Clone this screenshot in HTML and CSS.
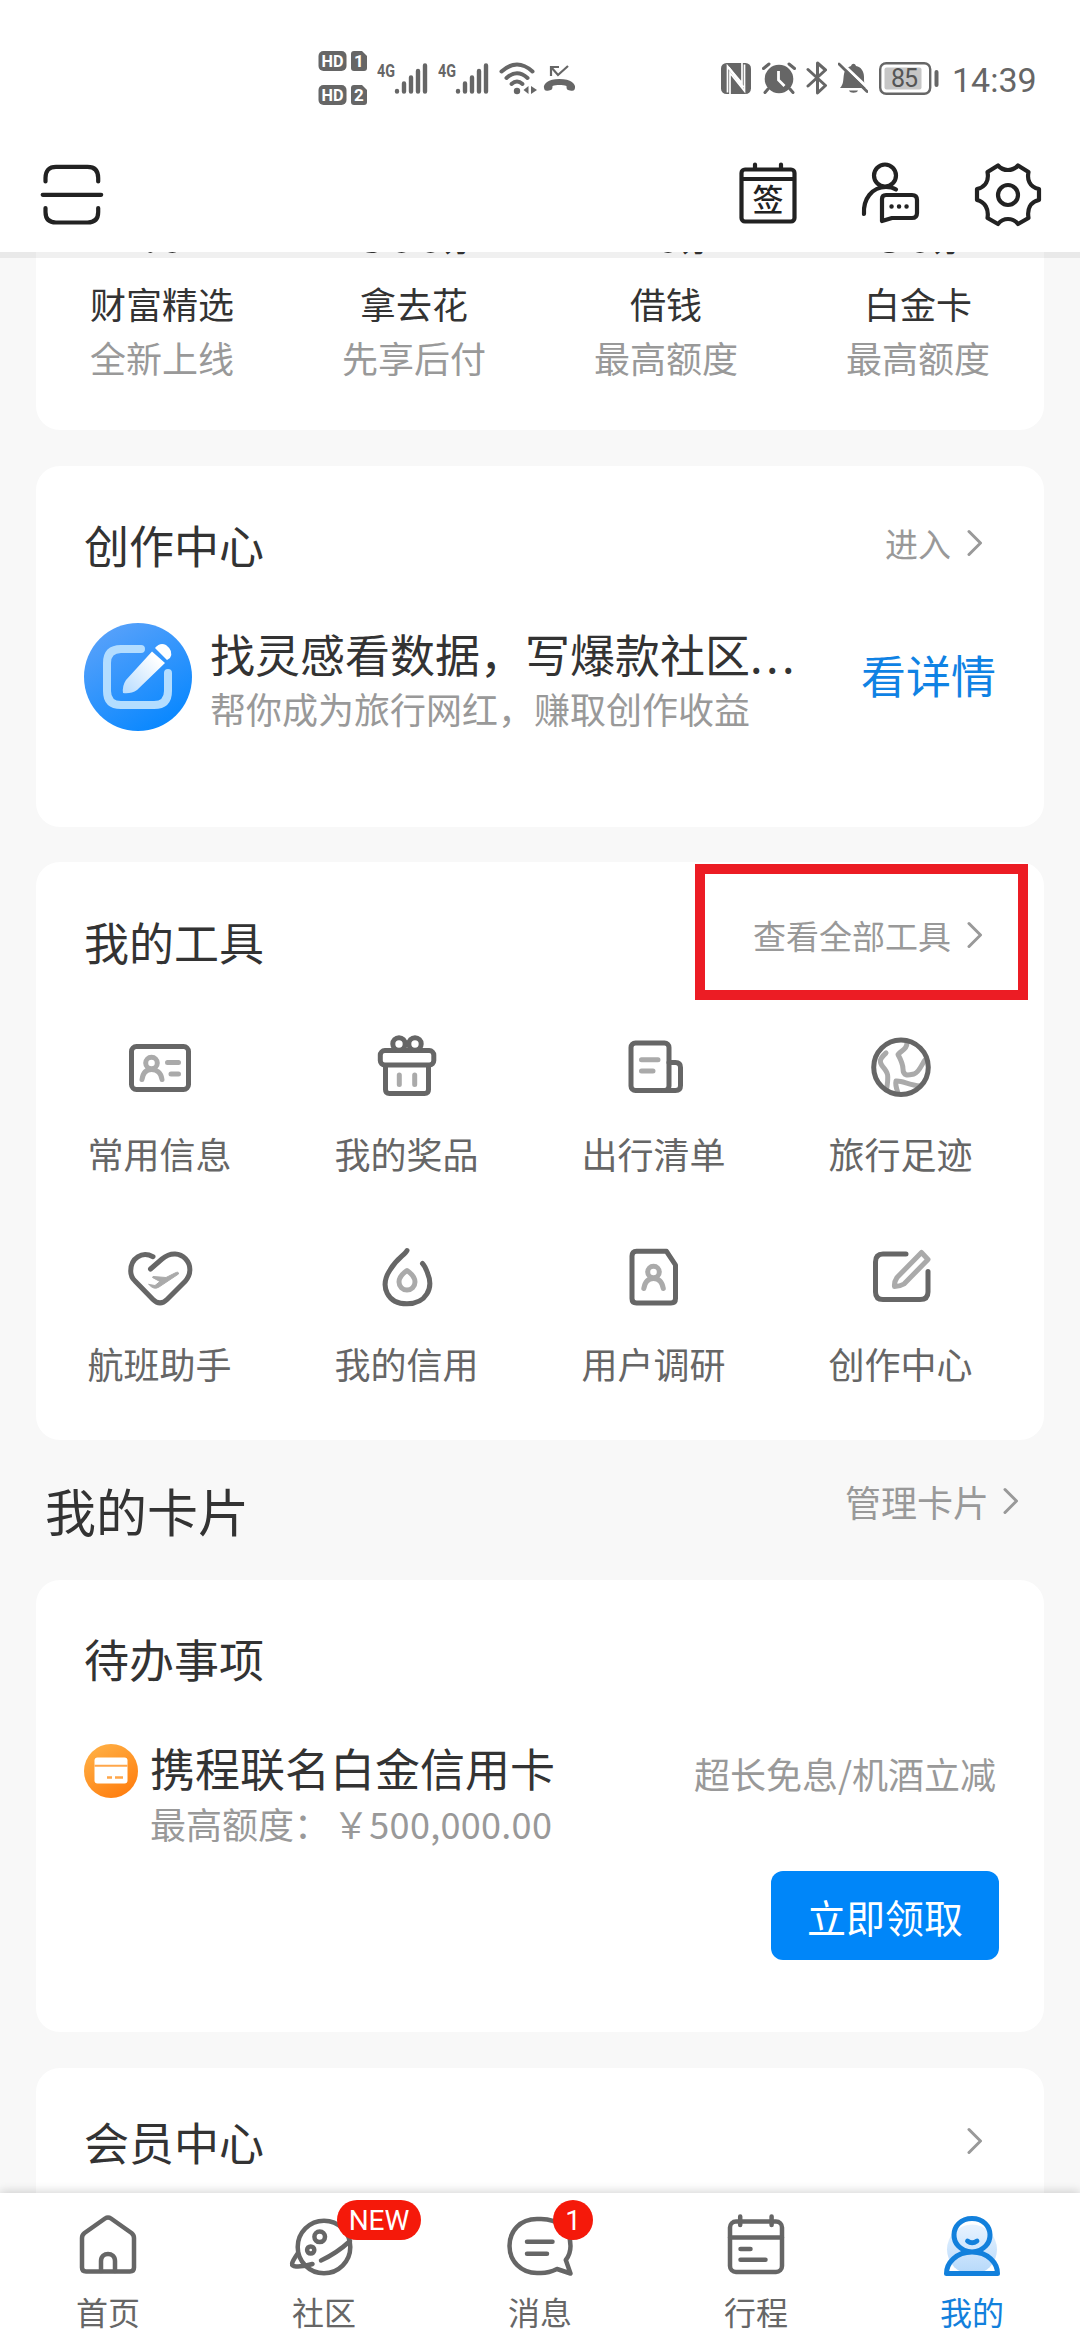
FILE: index.html
```html
<!DOCTYPE html>
<html lang="zh-CN">
<head>
<meta charset="utf-8">
<title>我的</title>
<link rel="stylesheet" href="styles.css">
</head>
<body>
<div class="screen">
  <header class="header">
    <div class="status">
      <div class="status-left">
        <svg class="st-sims" width="50" height="58" viewBox="0 0 50 58">
          <rect x="0.5" y="2" width="28" height="20" rx="5" fill="#666"/>
          <path d="M36 2h8l5 5v12a3 3 0 0 1-3 3H36a3 3 0 0 1-3-3V5a3 3 0 0 1 3-3z" fill="#666"/>
          <text x="14.5" y="18" class="st-hd" textLength="22" lengthAdjust="spacingAndGlyphs">HD</text><text x="41" y="18" class="st-hd">1</text>
          <rect x="0.5" y="36" width="28" height="20" rx="5" fill="#666"/>
          <path d="M36 36h8l5 5v12a3 3 0 0 1-3 3H36a3 3 0 0 1-3-3V39a3 3 0 0 1 3-3z" fill="#666"/>
          <text x="14.5" y="52" class="st-hd" textLength="22" lengthAdjust="spacingAndGlyphs">HD</text><text x="41" y="52" class="st-hd">2</text>
        </svg>
        <svg class="st-signal" width="52" height="34" viewBox="0 0 52 34">
          <text x="0" y="16" class="st-4g" textLength="18" lengthAdjust="spacingAndGlyphs">4G</text>
          <path d="M20 30.5v-.5M27 30.5v-8M34 30.5v-14M41 30.5v-20.500M48 30.500v-26" stroke="#666" stroke-width="4.400" stroke-linecap="round"/>
        </svg>
        <svg class="st-signal" width="52" height="34" viewBox="0 0 52 34">
          <text x="0" y="16" class="st-4g" textLength="18" lengthAdjust="spacingAndGlyphs">4G</text>
          <path d="M20 30.5v-.5M27 30.5v-8M34 30.5v-14M41 30.5v-20.500M48 30.500v-26" stroke="#666" stroke-width="4.400" stroke-linecap="round"/>
        </svg>
        <svg class="st-wifi" width="38" height="34" viewBox="0 0 38 34">
          <g fill="none" stroke="#666" stroke-width="4" stroke-linecap="round"><path d="M2.500 10.500Q18 -3.500 33.500 10.500"/><path d="M7.500 17Q18 7.500 28.500 17"/><path d="M12.500 23Q18 18 23.500 23"/></g>
          <circle cx="18" cy="30" r="3.200" fill="#666"/>
          <path d="M29.500 25v8l-5-4zM32 25v8l6-4z" fill="#666"/>
        </svg>
        <svg width="33" height="28" viewBox="0 0 33 28">
          <path d="M8 12V3h8M8 3l7 8L25 2" fill="none" stroke="#666" stroke-width="2.200"/>
          <path d="M1 24c-1-4 4-9 15.500-9S33 20 32 24c-.5 3-2 3-5 2.500-3-.4-3.500-1.500-3.500-4.500-4-1.300-10-1.300-14 0 0 3-.5 4.100-3.500 4.500-3 .5-4.500.5-5-2.500z" fill="#666"/>
        </svg>
      </div>
      <div class="status-right">
        <svg width="30" height="31" viewBox="0 0 30 31">
          <rect width="30" height="31" rx="5.500" fill="#666"/>
          <path d="M6.500 29.500V3L21 20V0M23.500 1.500V28L9 10V31" fill="none" stroke="#fff" stroke-width="1.700"/>
          <path d="M7.500 4.500 22.500 24.500" stroke="#fff" stroke-width="2.400"/>
        </svg>
        <svg class="st-alarm" width="34" height="32" viewBox="0 0 34 32">
          <circle cx="17" cy="17" r="14.300" fill="#666"/>
          <path d="M1.500 6.500 7 2M32.500 6.500 27 2M6 27l-3 3.500M28 27l3 3.500" stroke="#666" stroke-width="3" stroke-linecap="round"/>
          <path d="M16.500 9v9l6 6" fill="none" stroke="#fff" stroke-width="2.800"/>
        </svg>
        <svg class="st-bt" width="22" height="34" viewBox="0 0 22 34">
          <path d="M2 8.500 19.500 24.500 11.500 32V2l8 7L2 25" fill="none" stroke="#666" stroke-width="3" stroke-linejoin="round" stroke-linecap="round"/>
        </svg>
        <svg class="st-bell" width="30" height="34" viewBox="0 0 30 34">
          <path d="M2 27c4-4 3-9 4-14 1-5 4-7 7-8 1-3 4-3 5 0 5 1 8 5 8 11 0 5 0 8 3 11zM11 29.500h9c-1 3-8 3-9 0z" fill="#666"/>
          <path d="M3 1.500 32 29" stroke="#fff" stroke-width="3"/><path d="M1 3 29 30.500" stroke="#666" stroke-width="2.800" stroke-linecap="round"/>
        </svg>
        <svg class="st-battery" width="60" height="33" viewBox="0 0 60 33">
          <rect x="1.200" y="1.200" width="50" height="30.600" rx="6" fill="none" stroke="#666" stroke-width="2.400"/>
          <rect x="5.500" y="5.500" width="37" height="22" rx="2" fill="#c6c6c6"/>
          <rect x="55.500" y="8" width="4" height="17" rx="2" fill="#666"/>
          <text x="25.500" y="25" class="st-pct" textLength="27">85</text>
        </svg>
        <span class="time">14:39</span>
      </div>
    </div>
    <div class="toolbar">
      <svg class="bar-icon" viewBox="0 0 72 72">
        <path d="M9.500 22.500V19Q9.500 7.800 20 7.800H51.500Q62.200 7.800 62.200 19V22.500M9.500 49V53Q9.500 63.500 20 63.500H51.500Q62.200 63.500 62.200 53V49M6.700 35.800H65.200"/>
      </svg>
      <div class="bar-actions">
        <svg class="bar-icon" viewBox="0 0 72 72">
          <rect x="9.500" y="10.500" width="53" height="52" rx="3.500"/><path d="M10 20H62M23 5.500v4M49 5.500v4"/>
          <text x="36" y="52" class="sign">签</text>
        </svg>
        <svg class="bar-icon" viewBox="0 0 72 72">
          <circle cx="33" cy="16.500" r="11"/><path d="M12 55C11 40 20 28 34 28Q40 28 44 30.500"/>
          <path d="M30 62V40Q30 36 34 36H60Q65 36 65 41V54Q65 59 60 59H40Z"/><path d="M39.500 47.500h.1M47 47.500h.1M54.500 47.500h.1" stroke-width="4.400"/>
        </svg>
        <svg class="bar-icon" viewBox="0 0 72 72">
          <path d="M26 6.500Q30 11 36 11T46 6.500L56.500 13C55 20 57 28 67 30V41C58 43 55 50 56.500 59L46 65Q42 60 36 60T26 65L15.500 59C17 50 13 43 5 41V30C14 28 17 21 15.500 13Z"/>
          <circle cx="36" cy="36" r="10"/>
        </svg>
      </div>
    </div>
  </header>

  <main class="content">
    <section class="card finance">
      <div class="fin"><p class="fin-num">7.0<small>%</small></p><p class="fin-name">财富精选</p><p class="fin-desc">全新上线</p></div>
      <div class="fin"><p class="fin-num">300<small>万</small></p><p class="fin-name">拿去花</p><p class="fin-desc">先享后付</p></div>
      <div class="fin"><p class="fin-num">20<small>万</small></p><p class="fin-name">借钱</p><p class="fin-desc">最高额度</p></div>
      <div class="fin"><p class="fin-num">50<small>万</small></p><p class="fin-name">白金卡</p><p class="fin-desc">最高额度</p></div>
    </section>

    <section class="card creator">
      <div class="head"><h2>创作中心</h2><a class="more">进入<svg class="chev" viewBox="0 0 16 28"><path d="M2 2.500 13.500 14 2 25.500"/></svg></a></div>
      <div class="creator-row">
        <svg class="creator-icon" viewBox="0 0 108 108">
          <defs>
            <linearGradient id="blue" x1="0.2" y1="0" x2="0.8" y2="1"><stop offset="0" stop-color="#5aa2fa"/><stop offset="1" stop-color="#0486ff"/></linearGradient>
            <linearGradient id="pen" x1="1" y1="0" x2="0" y2="1"><stop offset="0.300" stop-color="#fff"/><stop offset="1" stop-color="#b6dcff"/></linearGradient>
          </defs>
          <circle cx="54" cy="54" r="54" fill="url(#blue)"/>
          <path d="M57 26H37Q23 26 23 40V68Q23 82 37 82H70Q84 82 84 68V50" fill="none" stroke="#b3ddff" stroke-width="8" stroke-linecap="round"/>
          <path d="M68 28.500 81 40 53 67Q47 71 39 70Q38 63 42 57ZM71 25Q76 19 82 22Q90 28 86 35L83 37Z" fill="url(#pen)"/>
        </svg>
        <div class="creator-text"><p class="t45">找灵感看数据，写爆款社区<span class="dots">...</span></p><p class="t36">帮你成为旅行网红，赚取创作收益</p></div>
        <a class="detail">看详情</a>
      </div>
    </section>

    <section class="card tools">
      <div class="head"><h2>我的工具</h2><a class="more more-up">查看全部工具<svg class="chev" viewBox="0 0 16 28"><path d="M2 2.500 13.500 14 2 25.500"/></svg></a></div>
      <div class="highlight"></div>
      <div class="grid">
        <div class="tool"><svg viewBox="0 0 72 72"><rect x="7.500" y="14.500" width="57" height="43" rx="5"/><g class="soft"><circle cx="27.500" cy="31" r="5.800"/><path d="M18 47.500C19 40 23 37.500 27.500 37.500S37 40 38 47.500M43.500 30.500H54.500M47 42H54.500"/></g></svg><span>常用信息</span></div>
        <div class="tool"><svg viewBox="0 0 72 72"><rect x="9.300" y="18.600" width="53.500" height="14.500" rx="4.500"/><path d="M14.500 33.500V57.500Q14.500 61.500 18.500 61.500H53.500Q57.500 61.500 57.500 57.500V33.500"/><circle cx="28" cy="12" r="6.200"/><circle cx="44" cy="12" r="6.200"/><path class="soft" d="M28.300 43V52.500M43.700 43V52.500"/></svg><span>我的奖品</span></div>
        <div class="tool"><svg viewBox="0 0 72 72"><rect x="13" y="11" width="38" height="47.500" rx="4.500"/><path d="M51 30.500H57.500Q62.500 30.500 62.500 35.500V53.500Q62.500 58.500 57.500 58.500H46"/><path class="soft" d="M23.500 27.800H40M23.500 39H35"/></svg><span>出行清单</span></div>
        <div class="tool"><svg viewBox="0 0 72 72"><path class="soft" d="M21 21C13 28 15 31 18 35C23 41 24 42 21.500 58M42 11C42 18 35 19 33 22.500C36 28 38 33 38 37C38 45 44 43 49 42C54 41 58 30 60 28M55 54C44 53 36 48 31 49C30 53 32 58 33 61"/><circle cx="36" cy="35.300" r="27.300"/></svg><span>旅行足迹</span></div>
        <div class="tool"><svg viewBox="0 0 72 72"><path d="M29 14.700C18 9 6.700 16 6.700 29Q6.700 35 11 39L29 57.500Q36 64.500 43 57.500L61 39.500C75 24 56 2 38 17L26.500 27"/><path class="solid" d="M25 42.500 31 43.500 36 39.500 28.500 35.500 29 34.500 42 35.500 51 31Q55 29 54.500 32L35 45Q30 48.500 25 42.500Z"/></svg><span>航班助手</span></div>
        <div class="tool"><svg viewBox="0 0 72 72"><path d="M36 8.500C34 13 26 16 19 28C8 45 17 61.800 36 61.800C55 61.800 63 46 56.500 31Q54 24 51.500 21.500"/><path class="soft" d="M36 28.500C31 32 28 36.500 28 40A8 8 0 0 0 44 40C44 36.500 41 32 36 28.500Z"/></svg><span>我的信用</span></div>
        <div class="tool"><svg viewBox="0 0 72 72"><path d="M18.500 9.300H48.500L57.500 23V56.500Q57.500 61 53 61H18.500Q14 61 14 56.500V14Q14 9.300 18.500 9.300Z"/><g class="soft"><circle cx="35.500" cy="30" r="5.800"/><path d="M25.800 46.500C27 39 31 36.500 35.500 36.500S44 39 45.300 46.500"/></g></svg><span>用户调研</span></div>
        <div class="tool"><svg viewBox="0 0 72 72"><path d="M41 12H18Q10.500 12 10.500 20V50Q10.500 57.500 18 57.500H55Q63 57.500 63 50V29.500"/><path class="soft" d="M56.500 10.500 63 17.500 39 42Q35 44.500 29.500 44.500Q29 40 32 35.500Z"/></svg><span>创作中心</span></div>
      </div>
    </section>

    <div class="section-head"><h1>我的卡片</h1><a class="manage">管理卡片<svg class="chev" viewBox="0 0 16 28"><path d="M2 2.500 13.500 14 2 25.500"/></svg></a></div>

    <section class="card todo">
      <div class="head"><h2>待办事项</h2></div>
      <div class="todo-row">
        <svg class="todo-icon" viewBox="0 0 54 54">
          <defs><linearGradient id="orange" x1="0.200" y1="0" x2="0.800" y2="1"><stop offset="0" stop-color="#ffb045"/><stop offset="1" stop-color="#ff7c0d"/></linearGradient></defs>
          <circle cx="27" cy="27" r="27" fill="url(#orange)"/>
          <rect x="10.500" y="13.500" width="33" height="26" rx="3" fill="#fff"/>
          <path d="M10.500 21.800H43.500" stroke="#ffa64a" stroke-width="2"/><path d="M23 33.500h5M31 33.500h8" stroke="#ffa64a" stroke-width="2.500"/>
        </svg>
        <div class="todo-text"><p class="t45">携程联名白金信用卡</p><p class="t36">最高额度：<span class="amount">￥500,000.00</span></p></div>
        <p class="t36 promo">超长免息/机酒立减</p>
      </div>
      <button class="claim">立即领取</button>
    </section>

    <section class="card member">
      <div class="head"><h2>会员中心</h2><svg class="chev" viewBox="0 0 16 28"><path d="M2 2.500 13.500 14 2 25.500"/></svg></div>
    </section>
  </main>

  <nav class="tabs">
    <a class="tab"><svg viewBox="0 0 72 72"><path d="M33 9.500Q36 7.500 39 9.500L59.500 24Q62 26 62 29V58.500Q62 62.500 58 62.500H14Q10 62.500 10 58.500V29Q10 26 12.500 24Z"/><path d="M29 62V52C29 42.500 43 42.500 43 52V62"/></svg><span>首页</span></a>
    <a class="tab"><svg viewBox="0 0 72 72"><circle cx="36" cy="38" r="26.300"/><circle cx="31.700" cy="27.800" r="5.300"/><circle cx="22.700" cy="41" r="3.600"/><path d="M33 51.500Q49 44 62 32M10 44C3 54 2 57 8 57.500Q15 58 24.500 55"/></svg><span>社区</span><b class="badge badge-new">NEW</b></a>
    <a class="tab"><svg viewBox="0 0 72 72"><path d="M61.800 51Q66.500 45 66.500 37C66.500 20 54 10 37 10H33C16 10 5.500 22 5.500 37S17 64 33 64H37Q45 64 53 60L66.500 64.500Z"/><path d="M23 32.700H48.500M23 44.700H43"/></svg><span>消息</span><b class="badge badge-one">1</b></a>
    <a class="tab"><svg viewBox="0 0 72 72"><rect x="10" y="12.500" width="52" height="50.500" rx="6"/><path d="M10 28.500H62M20.200 7.500V16M51.600 7.500V16M20.500 40H30.500M20.500 50.700H45.500"/></svg><span>行程</span></a>
    <a class="tab tab-on"><svg viewBox="0 0 72 72"><defs><linearGradient id="halo" x1="0" y1="0" x2="0" y2="1"><stop offset="0" stop-color="#e8f3ff"/><stop offset="1" stop-color="#b5d8fa"/></linearGradient></defs><circle cx="36" cy="40.500" r="25" fill="url(#halo)" stroke="none"/><path d="M36 43C11 41 13 9.500 36 9.500S61 41 36 43C20 43 10.500 54 10.500 64.500H61.500C61.500 54 52 43 36 43Z" stroke-width="5"/><path d="M31.500 32Q36 35.500 41 32" stroke-width="4.800"/></svg><span>我的</span></a>
  </nav>
</div>
</body>
</html>
```
FILE: styles.css
```css
* { box-sizing: border-box; margin: 0; padding: 0; }
body { width: 1080px; height: 2340px; overflow: hidden; background: #f8f8f8; color: #333; font-family: "Noto Sans CJK SC", sans-serif; }
h1, h2 { font-weight: 400; }
svg { display: block; flex: none; }
.screen { width: 1080px; height: 2340px; display: flex; flex-direction: column; }

/* Status bar and toolbar */
.header { position: relative; z-index: 2; height: 252px; flex: none; background: #fff; }
.header::after { content: ""; position: absolute; left: 0; right: 0; top: 100%; height: 6px; background: rgba(0, 0, 0, .06); }
.status { height: 156px; padding: 0 46px 0 318px; display: flex; justify-content: space-between; }
.status-left { display: flex; align-items: center; }
.status-right { display: flex; align-items: center; }
.st-sims { margin-right: 9px; }
.st-signal { margin-right: 9px; }
.st-wifi { margin-right: 6px; }
.st-alarm { margin-left: 11px; }
.st-bt { margin-left: 10px; }
.st-bell { margin-left: 10px; }
.st-battery { margin-left: 11px; }
.status-right .time { width: 82px; margin-left: 13px; font: 400 34px/40px Roboto, sans-serif; color: #666; white-space: nowrap; text-align: center; padding-top: 4px; }
.st-hd { font: 700 17px Roboto, sans-serif; fill: #fff; text-anchor: middle; }
.st-4g { font: 700 18px Roboto, sans-serif; fill: #666; }
.st-pct { font: 400 25px Roboto, sans-serif; fill: #555; text-anchor: middle; }
.toolbar { margin-top: 3px; height: 72px; padding: 0 36px; display: flex; justify-content: space-between; }
.bar-actions { display: flex; gap: 48px; }
.bar-icon { width: 72px; height: 72px; fill: none; stroke: #222; stroke-width: 4.200; stroke-linecap: round; stroke-linejoin: round; }
.bar-icon .sign { font-size: 31px; font-weight: 500; fill: #222; stroke: none; text-anchor: middle; }

/* Scrolling content */
.content { flex: 1; min-height: 0; overflow: hidden; padding: 0 36px; }
.card { background: #fff; border-radius: 24px; padding-left: 48px; }
.head { display: flex; justify-content: space-between; align-items: center; height: 60px; padding-right: 61px; }
h2 { font-size: 45px; line-height: 60px; padding-top: 3px; }
.more { display: flex; align-items: center; gap: 16px; font-size: 33px; line-height: 50px; color: #999; }
.more-up { align-self: flex-start; }
.chev { width: 16px; height: 28px; fill: none; stroke: #999; stroke-width: 3; stroke-linecap: round; stroke-linejoin: round; }
.t45 { font-size: 45px; line-height: 54px; white-space: nowrap; }
.t36 { font-size: 36px; line-height: 50px; color: #999; white-space: nowrap; }

.finance { margin-top: -57px; height: 235px; padding: 0; display: grid; grid-template-columns: repeat(4, 252px); text-align: center; }
.fin-num { height: 82px; line-height: 70px; font-size: 51px; font-weight: 500; }
.fin-num small { font-size: 25px; }
.fin-name { font-size: 36px; line-height: 52px; }
.fin-desc { font-size: 36px; line-height: 56px; color: #999; }

.creator { margin-top: 36px; height: 361px; padding-top: 47px; }
.creator-row { margin-top: 50px; padding-right: 48px; display: flex; align-items: flex-start; }
.creator-icon { width: 108px; height: 108px; }
.creator-text { flex: 1; margin-left: 18px; padding-top: 4px; }
.creator-text .t36 { margin-top: 2px; }
.dots { letter-spacing: 3.500px; }
.detail { margin-top: 22px; font-size: 45px; line-height: 60px; color: #0f82e4; }

.tools { position: relative; margin-top: 35px; height: 578px; padding: 48px 0 0; }
.tools .head { padding-left: 48px; }
.highlight { position: absolute; left: 659px; top: 2px; width: 333px; height: 136px; border: 10px solid #ec1c24; }
.grid { margin-top: 62px; display: grid; grid-template-columns: repeat(4, 247px); row-gap: 64px; }
.tool { display: flex; flex-direction: column; align-items: center; gap: 24px; font-size: 36px; line-height: 50px; color: #666; }
.tool svg { width: 72px; height: 72px; fill: none; stroke: #666; stroke-width: 5; stroke-linecap: round; stroke-linejoin: round; }
.tool .soft { stroke: #aaa; }
.tool .solid { fill: #aaa; stroke: #aaa; stroke-width: 1; }

.section-head { height: 140px; padding: 0 25px 0 9px; display: flex; justify-content: space-between; }
h1 { font-size: 51px; line-height: 60px; padding-top: 40px; }
.manage { display: flex; align-items: center; align-self: flex-start; gap: 14px; margin-top: 36px; font-size: 36px; line-height: 50px; color: #999; }

.todo { height: 452px; padding-top: 47px; }
.todo-row { margin-top: 53px; padding-right: 48px; display: flex; align-items: flex-start; }
.todo-icon { width: 54px; height: 54px; margin-top: 4px; }
.todo-text { flex: 1; margin-left: 12px; padding-top: 1px; }
.todo-text .t36 { margin-top: 3px; }
.amount { margin-left: 3px; letter-spacing: .3px; }
.promo { margin-top: 8px; }
.claim { display: block; width: 228px; height: 89px; margin: 23px 45px 0 auto; border: 0; border-radius: 12px; background: #0086f9; color: #fff; font: 400 39px/86px "Noto Sans CJK SC", sans-serif; }

.member { margin-top: 36px; height: 200px; padding-top: 43px; }
.member h2 { padding-top: 1px; }

/* Bottom tabs */
.tabs { position: relative; z-index: 2; height: 147px; flex: none; padding-top: 16px; background: #fff; box-shadow: 0 -2px 9px rgba(0, 0, 0, .16); display: grid; grid-template-columns: repeat(5, 216px); }
.tab { position: relative; display: flex; flex-direction: column; align-items: center; font-size: 32px; line-height: 44px; color: #666; }
.tab svg { width: 72px; height: 72px; margin-bottom: 8px; fill: none; stroke: #666; stroke-width: 4.500; stroke-linecap: round; stroke-linejoin: round; }
.tab-on { color: #1280dc; }
.tab-on svg { stroke: #1280dc; }
.badge { position: absolute; top: -9px; height: 40px; border-radius: 20px; background: #f5190a; color: #fff; font: 400 28px/41px Roboto, sans-serif; text-align: center; }
.badge-new { left: 121px; width: 84px; }
.badge-one { left: 121px; width: 40px; }
```
